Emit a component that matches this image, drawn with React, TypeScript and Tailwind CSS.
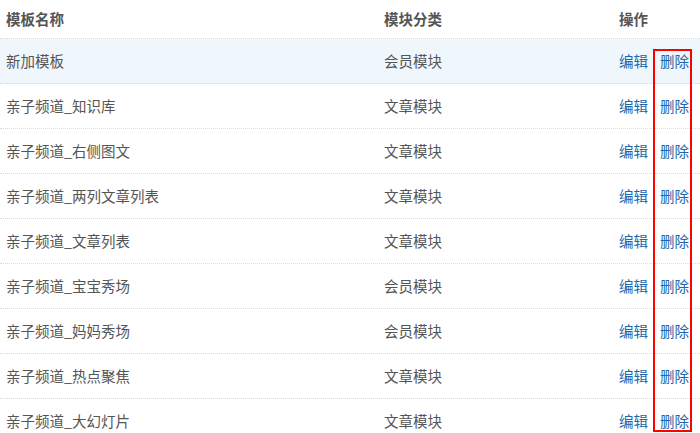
import React from "react";

const rows: [string, string][] = [
  ["新加模板", "会员模块"],
  ["亲子频道_知识库", "文章模块"],
  ["亲子频道_右侧图文", "文章模块"],
  ["亲子频道_两列文章列表", "文章模块"],
  ["亲子频道_文章列表", "文章模块"],
  ["亲子频道_宝宝秀场", "会员模块"],
  ["亲子频道_妈妈秀场", "会员模块"],
  ["亲子频道_热点聚焦", "文章模块"],
  ["亲子频道_大幻灯片", "文章模块"],
];

export default function App() {
  return (
    <div
      className="relative w-[700px] h-[433px] overflow-hidden bg-white text-[14.5px] text-[#555]"
      style={{ fontFamily: '"Microsoft YaHei", "Noto Sans CJK SC", "Liberation Sans", sans-serif' }}
    >
      <div className="grid grid-cols-[378px_235px_1fr] h-[39px] items-center border-b border-dotted border-[#c6e0f2] font-bold">
        <div className="pl-[6px]">模板名称</div>
        <div className="pl-[6px]">模块分类</div>
        <div className="pl-[6px]">操作</div>
      </div>
      {rows.map(([name, cat], i) => (
        <div
          key={i}
          className={`grid grid-cols-[378px_235px_1fr] h-[45px] items-center border-b border-dotted border-[#c6e0f2] ${
            i === 0 ? "bg-[#f0f7fc]" : "bg-white"
          }`}
        >
          <div className="pl-[6px] pb-[1px]">{name}</div>
          <div className="pl-[6px] pb-[1px]">{cat}</div>
          <div className="pl-[6px] pb-[1px] flex gap-[12px] text-[#2266aa]">
            <span>编辑</span>
            <span>删除</span>
          </div>
        </div>
      ))}
      <div className="absolute left-[653px] top-[49px] w-[39px] h-[383px] border-2 border-[#ff0000]" />
    </div>
  );
}
